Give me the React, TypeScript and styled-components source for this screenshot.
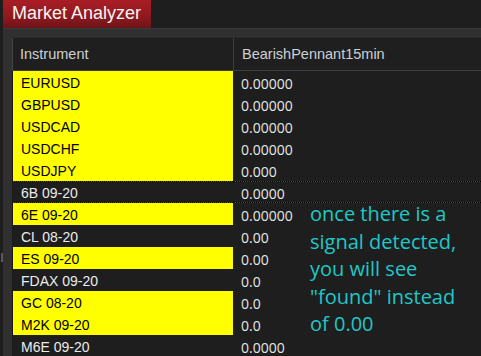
import React from "react";
import styled, { createGlobalStyle } from "styled-components";

const Global = createGlobalStyle`
  html, body {
    margin: 0;
    padding: 0;
    background: #1e1e1e;
    overflow: hidden;
  }
`;

const Window = styled.div`
  position: relative;
  width: 481px;
  height: 356px;
  display: flex;
  flex-direction: column;
  background: #1e1e1e;
  overflow: hidden;
  font-family: "Liberation Sans", Arial, sans-serif;
`;

const TitleBar = styled.div`
  height: 28px;
  display: flex;
  flex-shrink: 0;
  padding-left: 3px;
  background: #1e1e1e;
`;

const Tab = styled.div`
  width: 139px;
  height: 28px;
  padding-left: 9px;
  line-height: 26px;
  font-size: 18px;
  color: #f4f4f4;
  background: linear-gradient(180deg, #a91d25 0%, #93191f 55%, #6c1418 100%);
  white-space: nowrap;
`;

const Main = styled.div`
  flex: 1;
  display: flex;
  min-height: 0;
`;

const Edge = styled.div`
  width: 3px;
  flex-shrink: 0;
  background: #1e1e1e;
  display: flex;
  flex-direction: column;
`;

const Grip = styled.div`
  margin-top: 225px;
  width: 2px;
  height: 9px;
  margin-left: 1px;
  background: #5a5a5a;
`;

const Frame = styled.div`
  flex: 1;
  display: flex;
  flex-direction: column;
  background: #303030;
  border-top: 1px solid #3a3a3a;
  padding-top: 8px;
  padding-left: 9px;
  min-width: 0;
`;

const Table = styled.div`
  display: flex;
  flex-direction: column;
  background: #1e1e1e;
`;

const HeaderRow = styled.div`
  display: grid;
  grid-template-columns: 222px 1fr;
  height: 32px;
  border-top: 1px solid #2a2a2a;
  border-bottom: 1px solid #3d3d3d;
  background: #1f1f1f;
`;

const HeaderCell = styled.div<{ $first?: boolean }>`
  font-size: 14.5px;
  color: #cdd0d4;
  line-height: 32px;
  padding-left: ${(p) => (p.$first ? "7px" : "8px")};
  border-left: ${(p) => (p.$first ? "1px solid #454545" : "none")};
  border-right: ${(p) => (p.$first ? "1px solid #3d3d3d" : "none")};
  white-space: nowrap;
`;

const Row = styled.div<{ $focused?: boolean }>`
  display: grid;
  grid-template-columns: 222px 1fr;
  height: 22px;
  position: relative;
  background-color: #1e1e1e;
  ${(p) =>
    p.$focused
      ? `
    background-image:
      repeating-linear-gradient(90deg, #000 0 1px, #4a4a4a 1px 2px),
      repeating-linear-gradient(90deg, #000 0 1px, #4a4a4a 1px 2px);
    background-size: 100% 1px, 100% 1px;
    background-position: left top, left bottom;
    background-repeat: no-repeat;
  `
      : ""}
`;

const NameCell = styled.div<{ $hit?: boolean }>`
  border-left: 1px solid #1a1a1a;
  border-right: 1px solid #1e1e1e;
  background: ${(p) => (p.$hit ? "#ffff00" : "transparent")};
  color: ${(p) => (p.$hit ? "#000" : "#ececec")};
  font-size: 14px;
  line-height: 19px;
  padding-top: 3px;
  padding-left: 8px;
  white-space: nowrap;
`;

const ValueCell = styled.div`
  font-family: "Open Sans", "Noto Sans", sans-serif;
  font-size: 14px;
  line-height: 19px;
  padding-top: 2.5px;
  padding-left: 7px;
  color: #e6e6e6;
  white-space: nowrap;
`;

const Note = styled.div`
  position: absolute;
  left: 310px;
  top: 200px;
  font-family: "Open Sans", "Noto Sans", sans-serif;
  font-size: 20px;
  line-height: 27.5px;
  color: #1fc8c8;
  white-space: nowrap;
`;

const rows: { name: string; value: string; hit: boolean; focused?: boolean }[] = [
  { name: "EURUSD", value: "0.00000", hit: true },
  { name: "GBPUSD", value: "0.00000", hit: true },
  { name: "USDCAD", value: "0.00000", hit: true },
  { name: "USDCHF", value: "0.00000", hit: true },
  { name: "USDJPY", value: "0.000", hit: true },
  { name: "6B 09-20", value: "0.0000", hit: false, focused: true },
  { name: "6E 09-20", value: "0.00000", hit: true },
  { name: "CL 08-20", value: "0.00", hit: false },
  { name: "ES 09-20", value: "0.00", hit: true },
  { name: "FDAX 09-20", value: "0.0", hit: false },
  { name: "GC 08-20", value: "0.0", hit: true },
  { name: "M2K 09-20", value: "0.0", hit: true },
  { name: "M6E 09-20", value: "0.0000", hit: false },
];

export default function App() {
  return (
    <Window>
      <Global />
      <TitleBar>
        <Tab>Market Analyzer</Tab>
      </TitleBar>
      <Main>
        <Edge>
          <Grip />
        </Edge>
        <Frame>
          <Table>
            <HeaderRow>
              <HeaderCell $first>Instrument</HeaderCell>
              <HeaderCell>BearishPennant15min</HeaderCell>
            </HeaderRow>
            {rows.map((r) => (
              <Row key={r.name} $focused={r.focused}>
                <NameCell $hit={r.hit}>{r.name}</NameCell>
                <ValueCell>{r.value}</ValueCell>
              </Row>
            ))}
          </Table>
        </Frame>
      </Main>
      <Note>
        once there is a
        <br />
        signal detected,
        <br />
        you will see
        <br />
        "found" instead
        <br />
        of 0.00
      </Note>
    </Window>
  );
}
